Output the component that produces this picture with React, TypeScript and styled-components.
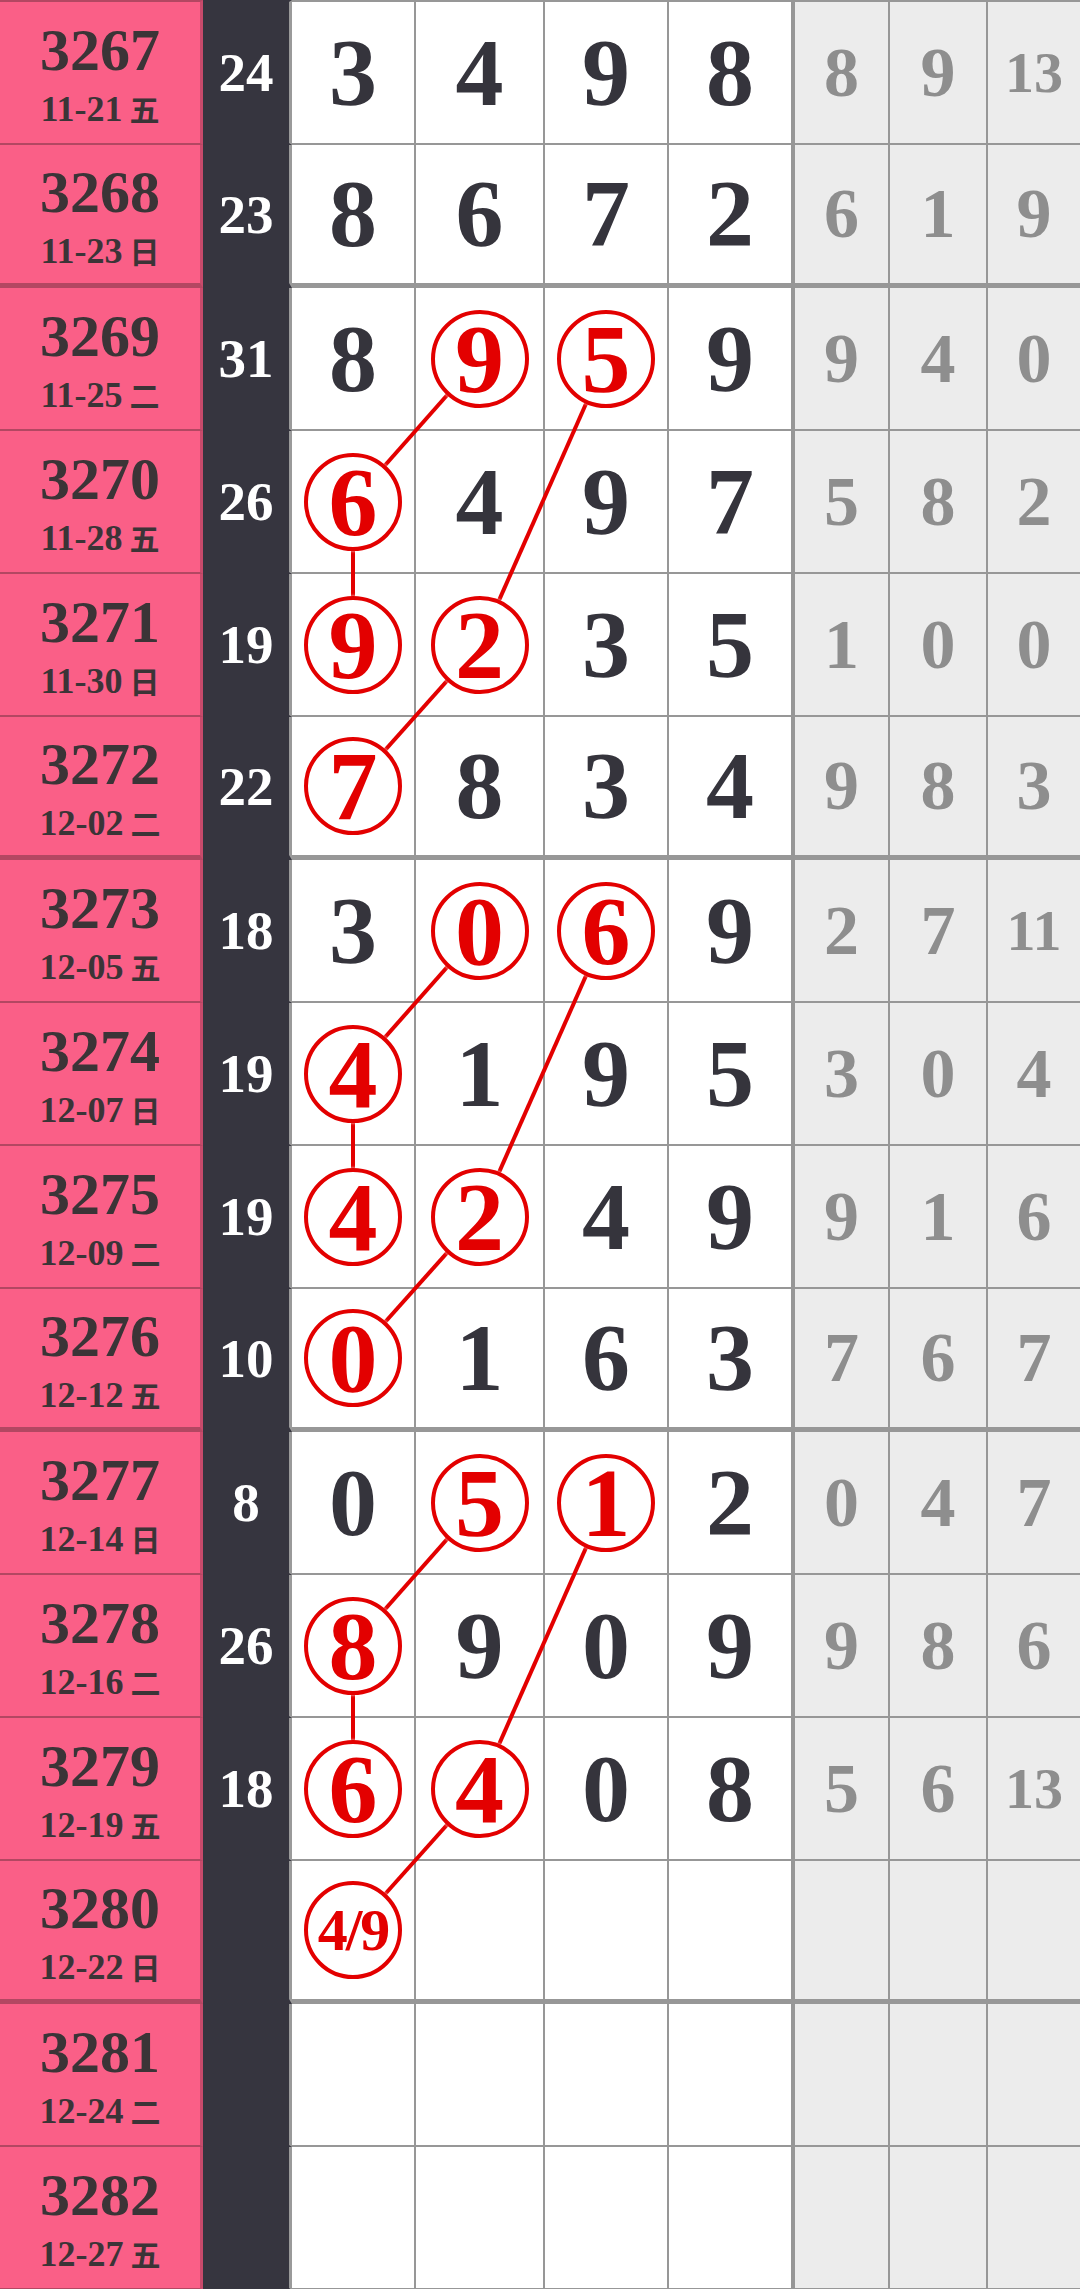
import React from 'react';
import styled, { createGlobalStyle } from 'styled-components';

const COLS = [203, 89, 124, 129, 124, 126, 95, 98, 92];
const ROW_H = 143;
const TOP = 2;
const RED = '#e30000';
const SERIF = '"Liberation Serif", "DejaVu Serif", serif';

interface RowData {
	p: string;
	d: string;
	w: string;
	s: string;
	n: string[];
	st: string[];
	hit?: number[];
}

const rows: RowData[] = [
	{ p: '3267', d: '11-21', w: '五', s: '24', n: ['3', '4', '9', '8'], st: ['8', '9', '13'] },
	{ p: '3268', d: '11-23', w: '日', s: '23', n: ['8', '6', '7', '2'], st: ['6', '1', '9'] },
	{ p: '3269', d: '11-25', w: '二', s: '31', n: ['8', '9', '5', '9'], st: ['9', '4', '0'], hit: [1, 2] },
	{ p: '3270', d: '11-28', w: '五', s: '26', n: ['6', '4', '9', '7'], st: ['5', '8', '2'], hit: [0] },
	{ p: '3271', d: '11-30', w: '日', s: '19', n: ['9', '2', '3', '5'], st: ['1', '0', '0'], hit: [0, 1] },
	{ p: '3272', d: '12-02', w: '二', s: '22', n: ['7', '8', '3', '4'], st: ['9', '8', '3'], hit: [0] },
	{ p: '3273', d: '12-05', w: '五', s: '18', n: ['3', '0', '6', '9'], st: ['2', '7', '11'], hit: [1, 2] },
	{ p: '3274', d: '12-07', w: '日', s: '19', n: ['4', '1', '9', '5'], st: ['3', '0', '4'], hit: [0] },
	{ p: '3275', d: '12-09', w: '二', s: '19', n: ['4', '2', '4', '9'], st: ['9', '1', '6'], hit: [0, 1] },
	{ p: '3276', d: '12-12', w: '五', s: '10', n: ['0', '1', '6', '3'], st: ['7', '6', '7'], hit: [0] },
	{ p: '3277', d: '12-14', w: '日', s: '8', n: ['0', '5', '1', '2'], st: ['0', '4', '7'], hit: [1, 2] },
	{ p: '3278', d: '12-16', w: '二', s: '26', n: ['8', '9', '0', '9'], st: ['9', '8', '6'], hit: [0] },
	{ p: '3279', d: '12-19', w: '五', s: '18', n: ['6', '4', '0', '8'], st: ['5', '6', '13'], hit: [0, 1] },
	{ p: '3280', d: '12-22', w: '日', s: '', n: ['4/9', '', '', ''], st: ['', '', ''], hit: [0] },
	{ p: '3281', d: '12-24', w: '二', s: '', n: ['', '', '', ''], st: ['', '', ''] },
	{ p: '3282', d: '12-27', w: '五', s: '', n: ['', '', '', ''], st: ['', '', ''] },
];

// group ends get a heavy bottom rule
const isThick = (i: number) => i % 4 === 1;

const colStart = (c: number) => COLS.slice(0, c).reduce((a, b) => a + b, 0);
const digitX = (k: number) => colStart(2 + k) + (COLS[2 + k] - 2) / 2;
const rowY = (i: number) => TOP + i * ROW_H + (ROW_H - (isThick(i) ? 5 : 2)) / 2;

// links between circled numbers, [row, col] pairs
const links: [number, number, number, number][] = [2, 6, 10].flatMap(g => [
	[g, 1, g + 1, 0],
	[g + 1, 0, g + 2, 0],
	[g, 2, g + 2, 1],
	[g + 2, 1, g + 3, 0],
] as [number, number, number, number][]);

const GlobalStyle = createGlobalStyle`
	body {
		margin: 0;
		background: #fff;
		font-family: ${SERIF};
	}
`;

const Sheet = styled.div`
	position: relative;
	width: 1080px;
	overflow: hidden;
`;

const Row = styled.div<{ $first?: boolean }>`
	display: grid;
	grid-template-columns: ${COLS.map(c => `${c}px`).join(' ')};
	height: ${p => (p.$first ? ROW_H + TOP : ROW_H)}px;
`;

const Cell = styled.div<{ $thick?: boolean; $first?: boolean }>`
	box-sizing: border-box;
	display: flex;
	align-items: center;
	justify-content: center;
	border-bottom: ${p => (p.$thick ? 5 : 2)}px solid #979797;
	border-top: ${p => (p.$first ? `${TOP}px solid #979797` : 'none')};
	font-family: ${SERIF};
	line-height: 1;
`;

const PeriodCell = styled(Cell)`
	flex-direction: column;
	background: #fa5f87;
	border-right: 3px solid #c84a6b;
	border-bottom-color: #b34762;
	border-top-color: #b34762;
	color: #3b3437;
	font-weight: 700;
`;

const PeriodNo = styled.div`
	font-size: 60px;
	margin-top: 2px;
`;

const DateLine = styled.div`
	font-size: 36px;
	margin-top: 11px;
	display: flex;
	align-items: baseline;
`;

const Weekday = styled.span`
	font-family: "Noto Sans CJK SC", sans-serif;
	font-size: 30px;
	font-weight: 700;
	margin-left: 7px;
`;

const SumCell = styled(Cell)`
	background: #36353f;
	border-right: 3px solid #9a9a9a;
	border-bottom-color: #36353f;
	border-top-color: #36353f;
	color: #fff;
	font-size: 55px;
	font-weight: 700;
`;

const DigitCell = styled(Cell)<{ $last?: boolean }>`
	background: #fff;
	border-right: ${p => (p.$last ? 4 : 2)}px solid #979797;
	color: #35343c;
	font-size: 96px;
	font-weight: 700;
`;

const Ball = styled.div<{ $small?: boolean }>`
	position: relative;
	z-index: 2;
	box-sizing: border-box;
	width: 98px;
	height: 98px;
	border: 4px solid ${RED};
	border-radius: 50%;
	background: #fff;
	box-shadow: 0 0 3px rgba(255, 255, 255, 0.9);
	color: ${RED};
	display: flex;
	align-items: center;
	justify-content: center;
	font-size: ${p => (p.$small ? 60 : 98)}px;
	letter-spacing: ${p => (p.$small ? -2 : 0)}px;
`;

const StatCell = styled(Cell)<{ $last?: boolean; $wide?: boolean }>`
	background: #ececec;
	border-right: ${p => (p.$last ? 'none' : '2px solid #979797')};
	color: #8e8e8e;
	font-size: ${p => (p.$wide ? 58 : 70)}px;
	font-weight: 700;
`;

const Links = styled.svg`
	position: absolute;
	left: 0;
	top: 0;
	z-index: 1;
	pointer-events: none;
`;

const totalH = TOP + rows.length * ROW_H;

const App = () => (
	<>
		<GlobalStyle />
		<Sheet>
			{rows.map((r, i) => {
				const thick = isThick(i);
				const first = i === 0;
				return (
					<Row key={r.p} $first={first}>
						<PeriodCell $thick={thick} $first={first}>
							<PeriodNo>{r.p}</PeriodNo>
							<DateLine>
								{r.d}
								<Weekday>{r.w}</Weekday>
							</DateLine>
						</PeriodCell>
						<SumCell $thick={thick} $first={first}>{r.s}</SumCell>
						{r.n.map((v, k) => (
							<DigitCell key={k} $thick={thick} $first={first} $last={k === 3}>
								{r.hit?.includes(k) ? <Ball $small={v.length > 1}>{v}</Ball> : v}
							</DigitCell>
						))}
						{r.st.map((v, k) => (
							<StatCell key={k} $thick={thick} $first={first} $last={k === 2} $wide={v.length > 1}>
								{v}
							</StatCell>
						))}
					</Row>
				);
			})}
			<Links width={1080} height={totalH} viewBox={`0 0 1080 ${totalH}`}>
				{links.map(([r1, c1, r2, c2], i) => (
					<line
						key={i}
						x1={digitX(c1)}
						y1={rowY(r1)}
						x2={digitX(c2)}
						y2={rowY(r2)}
						stroke={RED}
						strokeWidth={4}
					/>
				))}
			</Links>
		</Sheet>
	</>
);

export default App;
